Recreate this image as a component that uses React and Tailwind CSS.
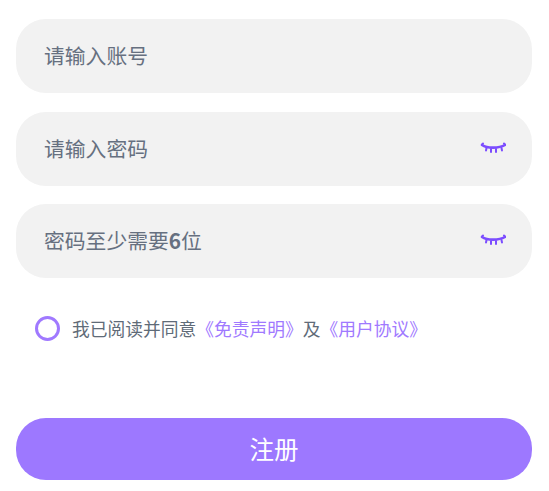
const fontStack = "font-['Noto_Sans_CJK_SC','Noto_Sans',sans-serif]";

function EyeClosed() {
  return (
    <svg width="26" height="14" viewBox="0 0 26 14" fill="none" stroke="#7c4dff" strokeWidth="2" strokeLinecap="round" className="shrink-0">
      <path d="M2 3 C7 6.5 19 6.5 25 3" strokeWidth="2.6" />
      <path d="M2 2.5 L3 1.5" />
      <path d="M25 2.5 L24 1.5" />
      <path d="M6.5 6 L6 8.5" />
      <path d="M11 7 L11 10" />
      <path d="M16 7 L16 10" />
      <path d="M21.5 6 L22 8.5" />
    </svg>
  );
}

function Field({ children, eye }) {
  return (
    <div className="flex h-[74px] items-center justify-between rounded-[30px] bg-[#f2f2f2] pl-[28px] pr-[26px]">
      <span className="text-[20.8px] text-[#667080]">{children}</span>
      {eye && <EyeClosed />}
    </div>
  );
}

export default function App() {
  return (
    <div className={`min-h-[491px] bg-white px-4 pt-[19px] ${fontStack}`}>
      <div className="flex w-[516px] flex-col gap-[18.5px]">
        <Field>请输入账号</Field>
        <Field eye>请输入密码</Field>
        <Field eye>密码至少需要<span className="font-bold">6</span>位</Field>
      </div>

      <div className="mt-[38px] flex items-center pl-[19px]">
        <div className="h-[25px] w-[25px] rounded-full border-[3px] border-[#a079ff]" />
        <p className="ml-[12px] text-[17.75px] leading-[25px] text-[#5f6b78]">
          我已阅读并同意<span className="text-[#a079ff]">《免责声明》</span>及<span className="text-[#a079ff]">《用户协议》</span>
        </p>
      </div>

      <button className="mt-[77px] flex h-[62px] w-[516px] items-center justify-center rounded-[30px] bg-[#9d78ff] text-[24.5px] text-white">
        注册
      </button>
    </div>
  );
}
